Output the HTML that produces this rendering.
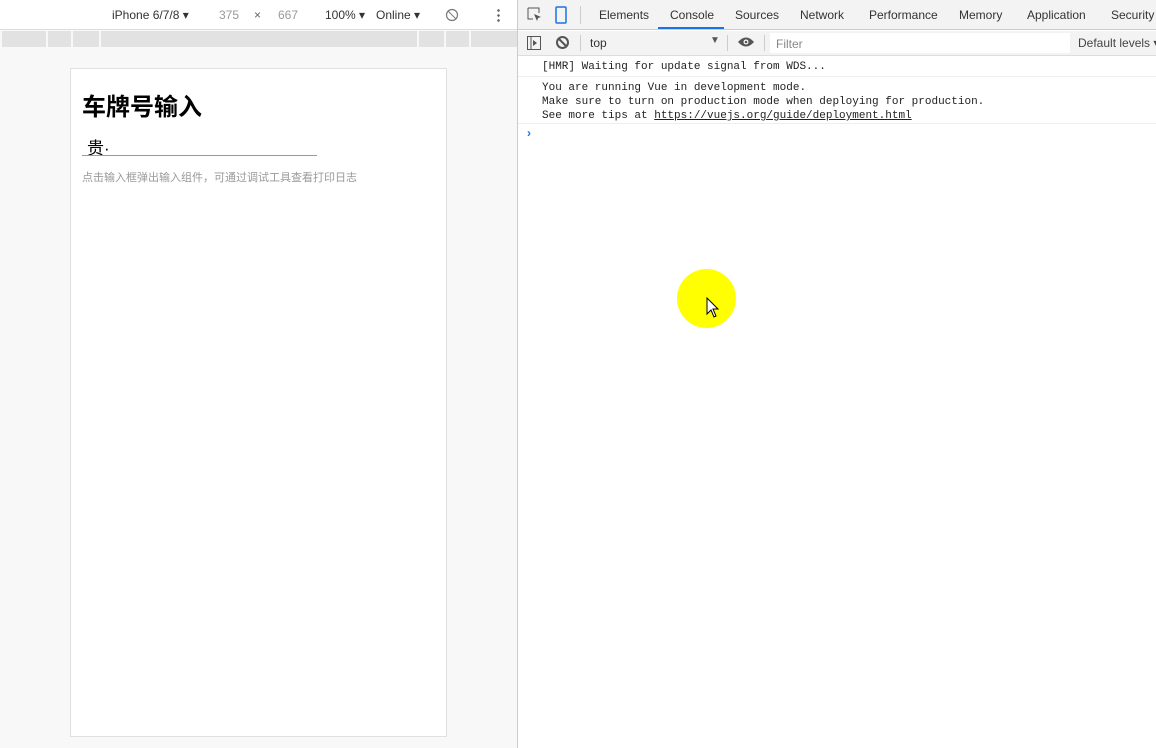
<!DOCTYPE html><html><head><meta charset="utf-8"><style>
*{margin:0;padding:0;box-sizing:border-box}
body{width:1156px;height:748px;overflow:hidden;position:relative;background:#fff;font-family:"Liberation Sans","Noto Sans CJK SC",sans-serif;font-size:12px;color:#333}
.a{position:absolute;white-space:nowrap}
.mono{font-family:"Liberation Mono",monospace;font-size:11px;color:#222;white-space:pre}
</style></head><body>
<div class="a" style="left:0;top:0;width:517px;height:748px;background:#f8f8f8"></div>
<div class="a" style="left:0;top:0;width:517px;height:30px;background:#fff;border-bottom:1px solid #ddd"></div>
<div class="a" style="left:112px;top:8px;color:#333">iPhone 6/7/8 ▾</div>
<div class="a" style="left:219px;top:8px;color:#999">375</div>
<div class="a" style="left:254px;top:8px;color:#666">×</div>
<div class="a" style="left:278px;top:8px;color:#999">667</div>
<div class="a" style="left:325px;top:8px">100% ▾</div>
<div class="a" style="left:376px;top:8px">Online ▾</div>
<svg class="a" style="left:445px;top:8px" width="14" height="14"><circle cx="7" cy="7" r="5.5" fill="none" stroke="#777" stroke-width="1.2"/><line x1="3" y1="3" x2="11" y2="11" stroke="#777"/></svg>
<div class="a" style="left:497px;top:8px;width:3px;height:14px;background:radial-gradient(circle,#666 1.2px,transparent 1.4px) 0 0/3px 5px"></div>
<div class="a" style="left:2px;top:31px;width:515px;height:16px;background:#e2e2e2"></div>
<div class="a" style="left:46px;top:31px;width:2px;height:16px;background:#f8f8f8"></div>
<div class="a" style="left:71px;top:31px;width:2px;height:16px;background:#f8f8f8"></div>
<div class="a" style="left:99px;top:31px;width:2px;height:16px;background:#f8f8f8"></div>
<div class="a" style="left:417px;top:31px;width:2px;height:16px;background:#f8f8f8"></div>
<div class="a" style="left:444px;top:31px;width:2px;height:16px;background:#f8f8f8"></div>
<div class="a" style="left:469px;top:31px;width:2px;height:16px;background:#f8f8f8"></div>
<div class="a" style="left:70px;top:68px;width:377px;height:669px;background:#fff;border:1px solid #e0e0e0"></div>
<div class="a" style="left:82px;top:87px;font-size:24px;font-weight:bold;color:#000">车牌号输入</div>
<div class="a" style="left:87px;top:134px;font-size:17px;color:#000">贵·</div>
<div class="a" style="left:82px;top:155px;width:235px;height:1px;background:#999"></div>
<div class="a" style="left:82px;top:169px;font-size:11px;color:#999">点击输入框弹出输入组件，可通过调试工具查看打印日志</div>
<div class="a" style="left:517px;top:0;width:1px;height:748px;background:#ccc"></div>
<div class="a" style="left:518px;top:0;width:638px;height:30px;background:#f3f3f3;border-bottom:1px solid #ccc"></div>
<svg class="a" style="left:527px;top:7px" width="16" height="16"><path d="M1 1h11v5M1 1v11h5" fill="none" stroke="#555"/><path d="M7 7l7 3-3 1-1 3z" fill="#555"/></svg>
<svg class="a" style="left:553px;top:6px" width="16" height="18"><rect x="3" y="1" width="10" height="16" rx="1" fill="none" stroke="#1a73e8" stroke-width="1.5"/></svg>
<div class="a" style="left:580px;top:6px;width:1px;height:18px;background:#ccc"></div>
<div class="a" style="left:599px;top:8px;color:#333">Elements</div>
<div class="a" style="left:670px;top:8px;color:#333">Console</div>
<div class="a" style="left:658px;top:27px;width:66px;height:2px;background:#1a73e8"></div>
<div class="a" style="left:735px;top:8px">Sources</div>
<div class="a" style="left:800px;top:8px">Network</div>
<div class="a" style="left:869px;top:8px">Performance</div>
<div class="a" style="left:959px;top:8px">Memory</div>
<div class="a" style="left:1027px;top:8px">Application</div>
<div class="a" style="left:1111px;top:8px">Security</div>
<div class="a" style="left:518px;top:31px;width:638px;height:25px;background:#f3f3f3;border-bottom:1px solid #ddd"></div>
<svg class="a" style="left:526px;top:35px" width="16" height="16"><rect x="1.5" y="1.5" width="13" height="13" fill="none" stroke="#555"/><line x1="5" y1="2" x2="5" y2="14" stroke="#555"/><path d="M7 5l4 3-4 3z" fill="#555"/></svg>
<svg class="a" style="left:555px;top:35px" width="15" height="15"><circle cx="7.5" cy="7.5" r="5.5" fill="none" stroke="#555" stroke-width="2"/><line x1="3.5" y1="3.5" x2="11.5" y2="11.5" stroke="#555" stroke-width="2"/></svg>
<div class="a" style="left:580px;top:35px;width:1px;height:16px;background:#ccc"></div>
<div class="a" style="left:590px;top:36px">top</div>
<div class="a" style="left:710px;top:35px;font-size:10px;color:#555">▼</div>
<div class="a" style="left:727px;top:35px;width:1px;height:16px;background:#ccc"></div>
<svg class="a" style="left:737px;top:36px" width="18" height="12"><path d="M1 6Q9-3 17 6Q9 15 1 6z" fill="#555"/><circle cx="9" cy="6" r="2.5" fill="#fff"/><circle cx="9" cy="6" r="1.3" fill="#555"/></svg>
<div class="a" style="left:764px;top:35px;width:1px;height:16px;background:#ccc"></div>
<div class="a" style="left:770px;top:33px;width:300px;height:20px;background:#fff"></div>
<div class="a" style="left:776px;top:37px;color:#888">Filter</div>
<div class="a" style="left:1078px;top:36px;color:#444">Default levels ▾</div>
<div class="a mono" style="left:542px;top:61px">[HMR] Waiting for update signal from WDS...</div>
<div class="a" style="left:518px;top:76px;width:638px;height:1px;background:#eee"></div>
<div class="a mono" style="left:542px;top:81px;line-height:14px">You are running Vue in development mode.
Make sure to turn on production mode when deploying for production.
See more tips at <u>https://vuejs.org/guide/deployment.html</u></div>
<div class="a" style="left:518px;top:123px;width:638px;height:1px;background:#eee"></div>
<div class="a" style="left:527px;top:126px;color:#1a73e8;font-size:12px;font-weight:bold">›</div>
<div class="a" style="left:677px;top:269px;width:59px;height:59px;border-radius:50%;background:#ffff00"></div>
<svg class="a" style="left:706px;top:297px" width="14" height="22"><path d="M1 1v16l4-4 3 7 2-1-3-7h5z" fill="#fff" stroke="#000"/></svg>
</body></html>
